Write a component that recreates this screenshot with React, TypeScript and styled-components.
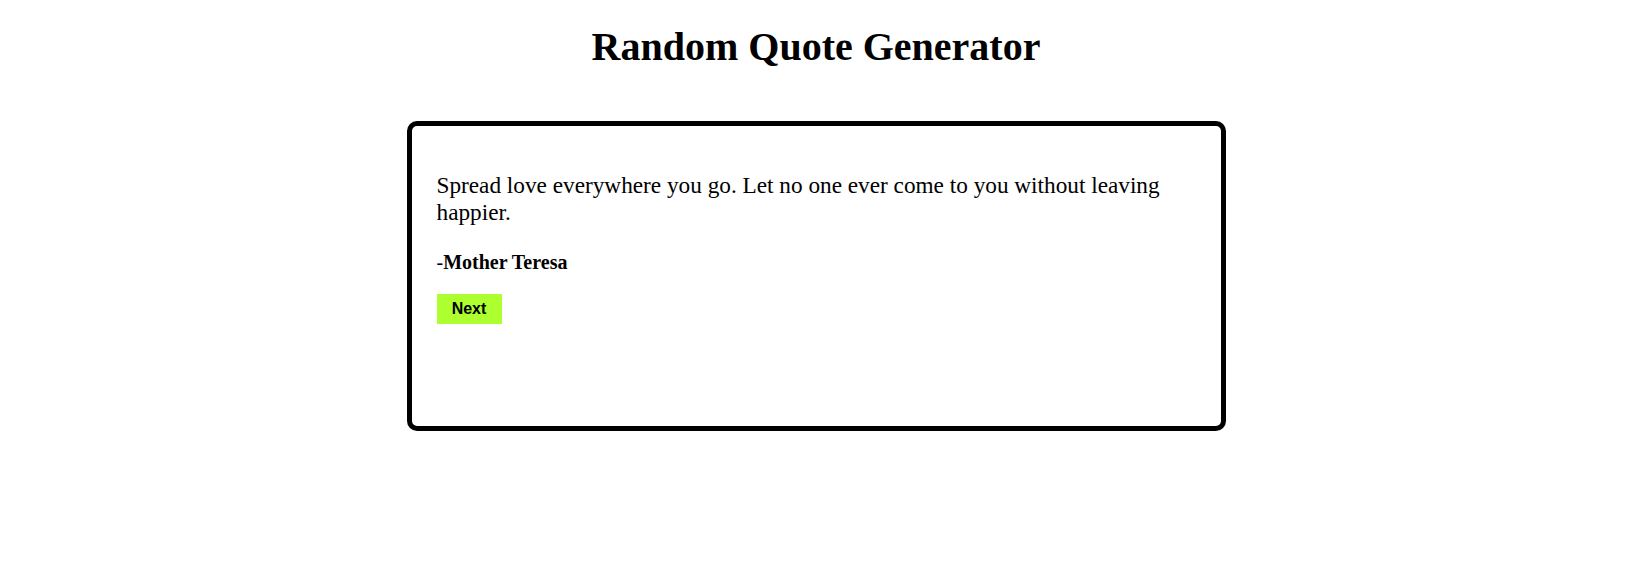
import React from "react";
import styled, { createGlobalStyle } from "styled-components";

const GlobalStyle = createGlobalStyle`
  html, body {
    margin: 0;
    padding: 0;
    background: #ffffff;
  }
  body {
    font-family: "Liberation Serif", "Times New Roman", serif;
    color: #000000;
  }
`;

const Page = styled.main`
  display: flex;
  flex-direction: column;
  align-items: center;
  padding: 24px 9px 0 0;
`;

const Title = styled.h1`
  margin: 0;
  font-size: 40px;
  line-height: 46px;
  font-weight: bold;
  font-family: "Liberation Serif", "Times New Roman", serif;
`;

const Card = styled.section`
  box-sizing: border-box;
  width: 819px;
  height: 310px;
  margin-top: 51px;
  padding: 46px 25px 20px 25px;
  border: 5px solid #000000;
  border-radius: 10px;
  display: flex;
  flex-direction: column;
  align-items: flex-start;
`;

const Quote = styled.p`
  margin: 0;
  font-size: 23.25px;
  line-height: 27px;
`;

const Author = styled.p`
  margin: 25px 0 0 0;
  font-size: 20px;
  line-height: 23px;
`;

const Name = styled.strong`
  font-weight: bold;
`;

const NextButton = styled.button`
  margin-top: 20px;
  width: 65px;
  height: 30px;
  border: none;
  padding: 0;
  background: #adff2f;
  color: #000000;
  font-family: "Liberation Sans", Arial, sans-serif;
  font-weight: bold;
  font-size: 16px;
  cursor: pointer;
`;

export default function App() {
  return (
    <>
      <GlobalStyle />
      <Page>
        <Title>Random Quote Generator</Title>
        <Card>
          <Quote>
            Spread love everywhere you go. Let no one ever come to you without leaving happier.
          </Quote>
          <Author>
            -<Name>Mother Teresa</Name>
          </Author>
          <NextButton type="button">Next</NextButton>
        </Card>
      </Page>
    </>
  );
}
